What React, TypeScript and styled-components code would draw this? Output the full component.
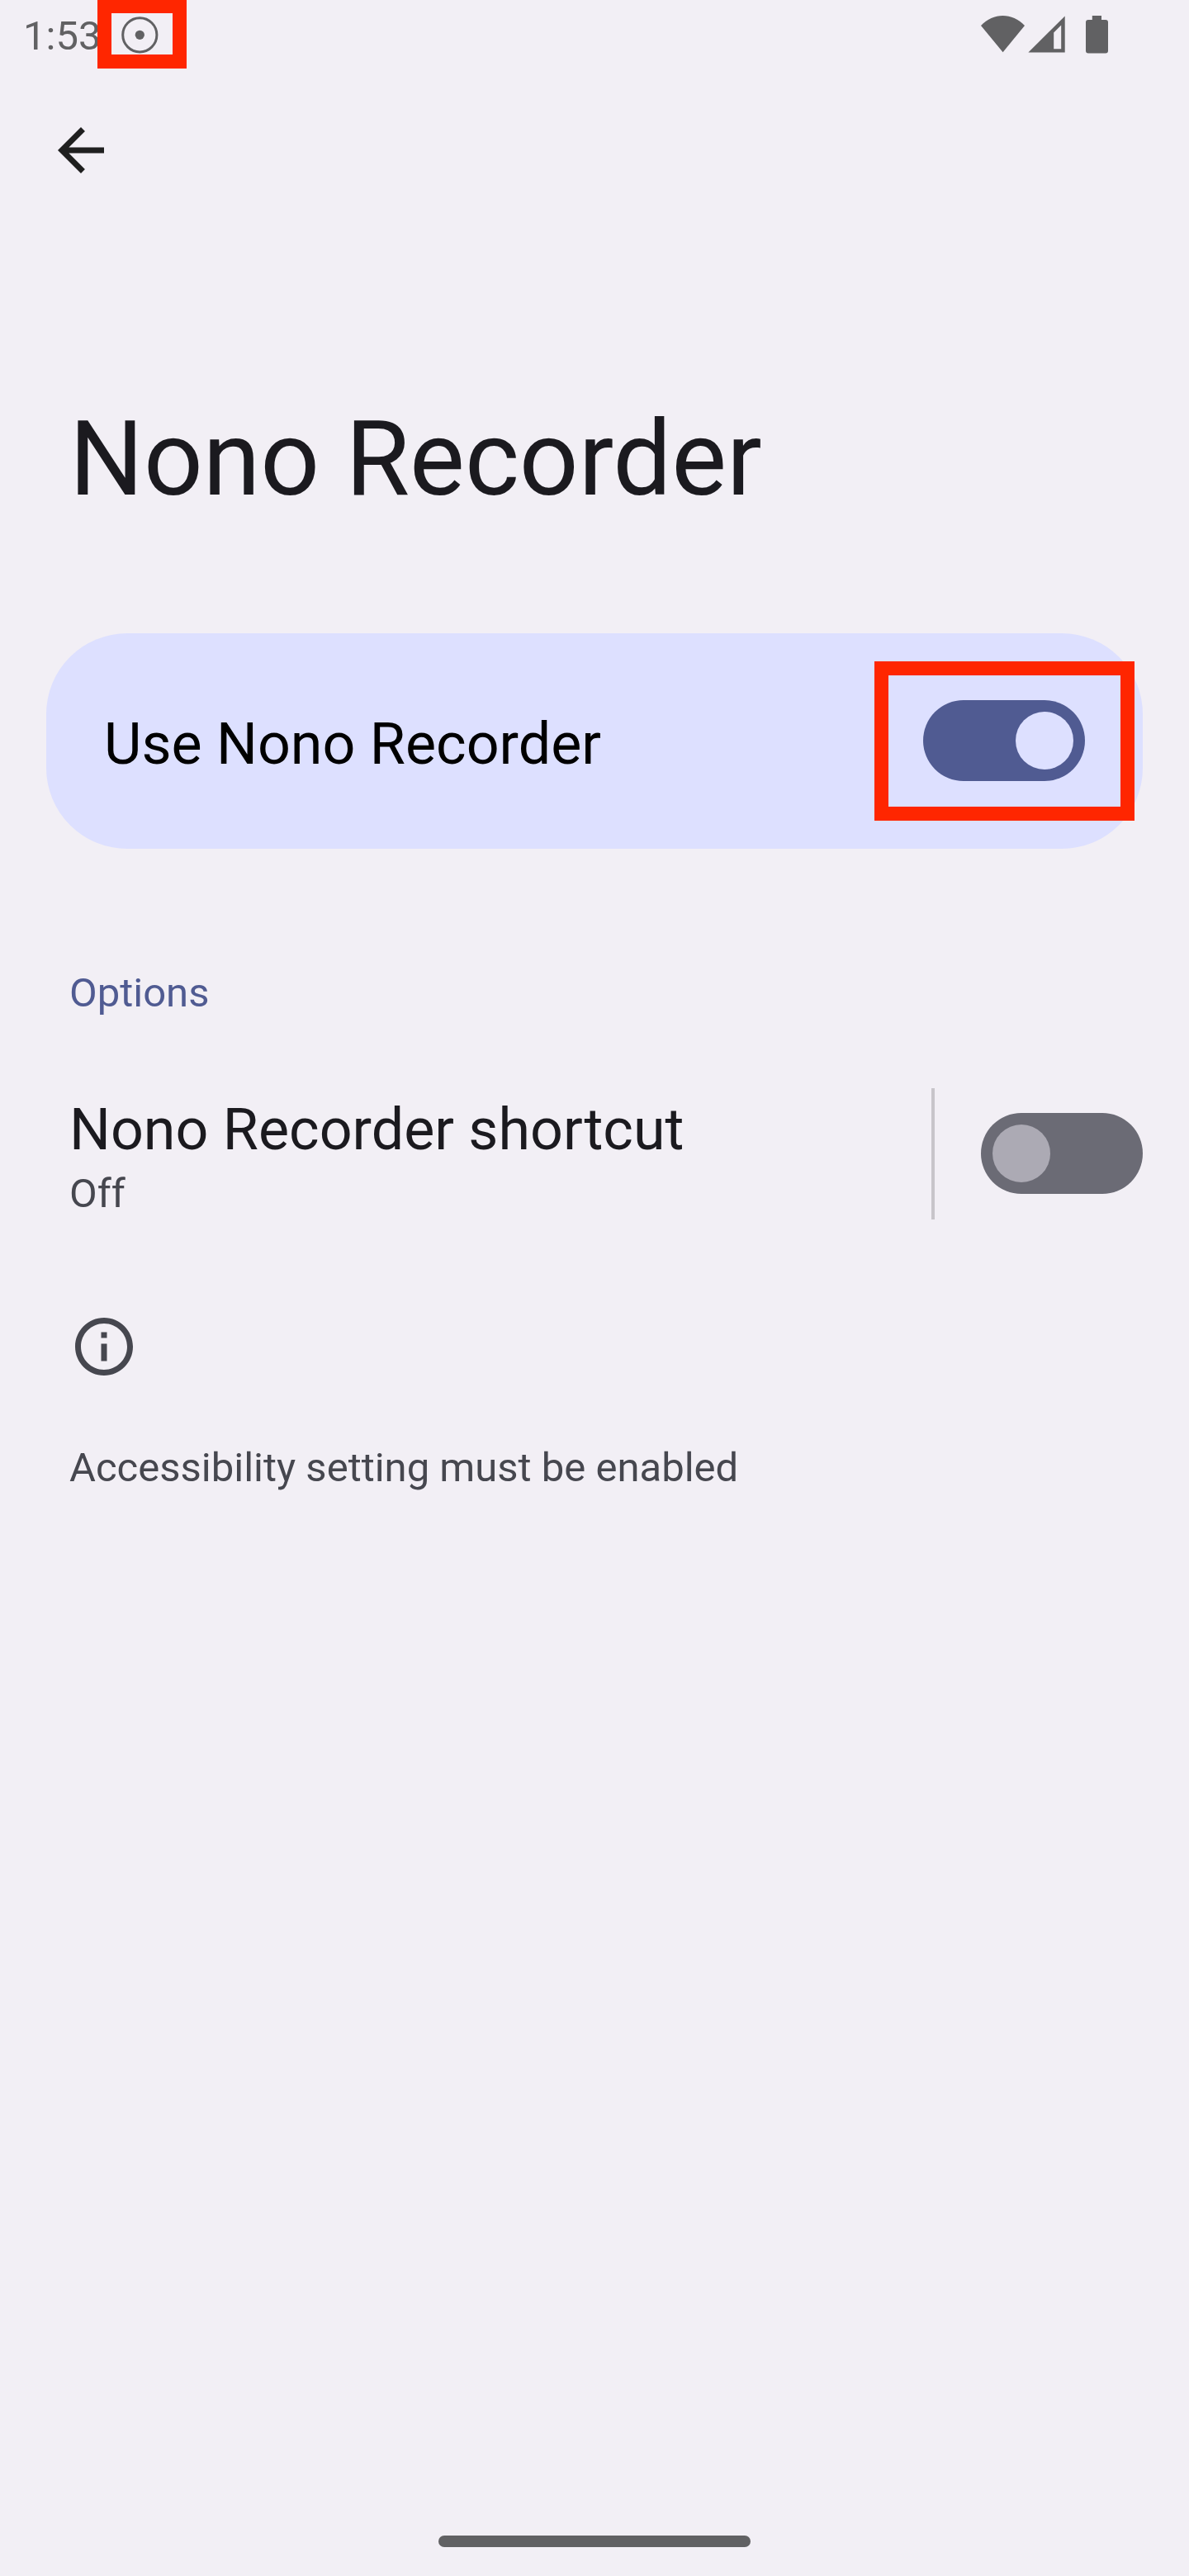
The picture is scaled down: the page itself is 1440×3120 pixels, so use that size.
import React, { useState } from "react";
import styled, { createGlobalStyle } from "styled-components";

const color = {
  surface: "#f2eff5",
  card: "#dde0ff",
  primary: "#505b92",
  text: "#1b1a1f",
  muted: "#46474f",
  status: "#616163",
  divider: "#c8c5ca",
  trackOff: "#6b6b75",
  thumbOff: "#acaab4",
  mark: "#ff2600",
};

const GlobalStyle = createGlobalStyle`
  * { box-sizing: border-box; }
  body { margin: 0; background: ${color.surface}; }
`;

const Screen = styled.div`
  width: 1440px;
  height: 3120px;
  display: flex;
  flex-direction: column;
  background: ${color.surface};
  color: ${color.text};
  font-family: Roboto, "Liberation Sans", sans-serif;
  overflow: hidden;
`;

const StatusBar = styled.header`
  height: 140px;
  padding: 15px 98px 0 28px;
  display: flex;
  justify-content: space-between;
  align-items: flex-start;
  color: ${color.status};
`;

const StatusGroup = styled.div`
  display: flex;
  align-items: flex-start;
`;

const Time = styled.span`
  font-size: 49px;
  line-height: 58px;
  width: 95px;
`;

const Marked = styled.div`
  position: relative;
  display: flex;
`;

const Mark = styled.span<{ $top: number; $right: number; $bottom: number; $left: number }>`
  position: absolute;
  top: ${(p) => -p.$top}px;
  right: ${(p) => -p.$right}px;
  bottom: ${(p) => -p.$bottom}px;
  left: ${(p) => -p.$left}px;
  border: 17px solid ${color.mark};
  pointer-events: none;
`;

const RecordingSlot = styled(Marked)`
  margin: 4px 0 0 23px;
`;

const Glyph = styled.svg`
  display: block;
  flex: none;
  fill: currentColor;
`;

const AppBar = styled.nav`
  padding-left: 56px;
  height: 342px;
`;

const IconButton = styled.button`
  display: flex;
  padding: 0;
  border: 0;
  background: none;
  color: #1f1f1f;
`;

const Title = styled.h1`
  margin: 0 84px 137px;
  font-size: 126px;
  font-weight: 400;
  line-height: 148px;
`;

const MainSwitchCard = styled.section`
  margin: 0 56px;
  height: 261px;
  padding: 0 70px 1px;
  border-radius: 98px;
  background: ${color.card};
  color: #000;
  display: flex;
  align-items: center;
  justify-content: space-between;
`;

const CardLabel = styled.span`
  padding-top: 8px;
  font-size: 70px;
  line-height: 82px;
`;

const Track = styled.button<{ $on: boolean }>`
  width: 196px;
  height: 98px;
  padding: 14px;
  border: 0;
  border-radius: 49px;
  display: flex;
  flex: none;
  justify-content: ${(p) => (p.$on ? "flex-end" : "flex-start")};
  background: ${(p) => (p.$on ? color.primary : color.trackOff)};
`;

const Thumb = styled.span<{ $on: boolean }>`
  width: 70px;
  height: 70px;
  border-radius: 50%;
  background: ${(p) => (p.$on ? color.card : color.thumbOff)};
`;

const SectionLabel = styled.h2`
  margin: 146px 84px 86px;
  font-size: 49px;
  font-weight: 400;
  line-height: 58px;
  color: ${color.primary};
`;

const PreferenceRow = styled.section`
  height: 159px;
  margin: 0 56px 0 84px;
  display: flex;
`;

const PreferenceText = styled.div`
  flex: 1;
  display: flex;
  flex-direction: column;
  gap: 8px;
  padding-top: 9px;
`;

const PreferenceTitle = styled.span`
  font-size: 70px;
  line-height: 82px;
`;

const Secondary = styled.span`
  font-size: 49px;
  line-height: 58px;
  color: ${color.muted};
`;

const PreferenceAction = styled.div`
  width: 256px;
  padding-top: 30px;
  border-left: 4px solid ${color.divider};
  display: flex;
  align-items: flex-start;
  justify-content: flex-end;
`;

const Footer = styled.footer`
  flex: 1;
  margin: 112px 84px 0;
  display: flex;
  flex-direction: column;
  gap: 76px;
  color: ${color.muted};
`;

const NavigationHandle = styled.div`
  width: 378px;
  height: 14px;
  margin: 0 auto 35px;
  border-radius: 7px;
  background: ${color.status};
`;

function Switch({ initial, label }: { initial: boolean; label: string }) {
  const [on, setOn] = useState(initial);
  return (
    <Track $on={on} role="switch" aria-checked={on} aria-label={label} onClick={() => setOn(!on)}>
      <Thumb $on={on} />
    </Track>
  );
}

export default function App() {
  return (
    <>
      <GlobalStyle />
      <Screen>
        <StatusBar>
          <StatusGroup>
            <Time>1:53</Time>
            <RecordingSlot>
              <Glyph width="46" height="46" viewBox="0 0 46 46">
                <circle cx="23.3" cy="23.3" r="20.6" fill="none" stroke="currentColor" strokeWidth="3" />
                <circle cx="23.3" cy="23.3" r="5.6" />
              </Glyph>
              <Mark $top={20} $right={34} $bottom={18} $left={28} />
            </RecordingSlot>
          </StatusGroup>
          <StatusGroup>
            <Glyph width="154" height="54" viewBox="1188 15 154 54">
              <path d="M1214.6 63.2 L1188 31 C1203 15 1226 15 1241 31 Z" />
              <path
                fillRule="evenodd"
                d="M1245.4 63.6 L1289.7 19.5 V63.6 Z M1276.2 39.4 V59.3 H1285.2 V30.6 Z"
              />
              <path d="M1322.8 19 h11.2 v5 h5 a3 3 0 0 1 3 3 v34.5 a3 3 0 0 1 -3 3 h-21 a3 3 0 0 1 -3 -3 v-34.5 a3 3 0 0 1 3 -3 h4.8 z" />
            </Glyph>
          </StatusGroup>
        </StatusBar>

        <AppBar>
          <IconButton aria-label="Back">
            <Glyph width="84" height="84" viewBox="0 0 24 24">
              <path d="M20 11H7.83l5.59-5.59L12 4l-8 8 8 8 1.41-1.41L7.83 13H20v-2z" />
            </Glyph>
          </IconButton>
        </AppBar>

        <Title>Nono Recorder</Title>

        <MainSwitchCard>
          <CardLabel>Use Nono Recorder</CardLabel>
          <Marked>
            <Switch initial label="Use Nono Recorder" />
            <Mark $top={47} $right={60} $bottom={48} $left={59} />
          </Marked>
        </MainSwitchCard>

        <SectionLabel>Options</SectionLabel>
        <PreferenceRow>
          <PreferenceText>
            <PreferenceTitle>Nono Recorder shortcut</PreferenceTitle>
            <Secondary>Off</Secondary>
          </PreferenceText>
          <PreferenceAction>
            <Switch initial={false} label="Nono Recorder shortcut" />
          </PreferenceAction>
        </PreferenceRow>

        <Footer>
          <Glyph width="84" height="84" viewBox="0 0 24 24">
            <path d="M11 7h2v2h-2zM11 11h2v6h-2zM12 2C6.48 2 2 6.48 2 12s4.48 10 10 10 10-4.48 10-10S17.52 2 12 2zm0 18c-4.41 0-8-3.59-8-8s3.59-8 8-8 8 3.59 8 8-3.59 8-8 8z" />
          </Glyph>
          <Secondary>Accessibility setting must be enabled</Secondary>
        </Footer>
        <NavigationHandle />
      </Screen>
    </>
  );
}
